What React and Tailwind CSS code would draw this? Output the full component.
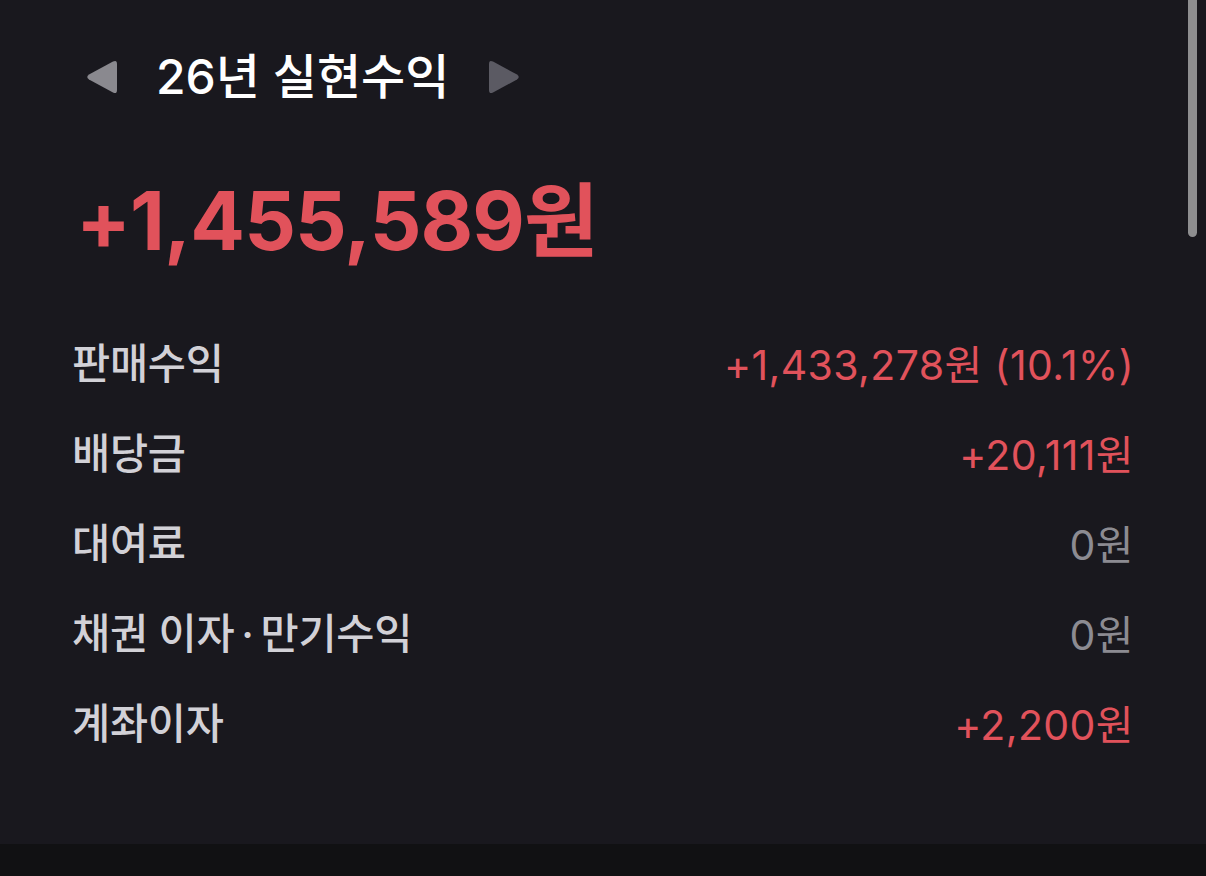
import React from 'react';

const Dot = () => <span className="mx-[7px]">·</span>;

const rows = [
  { key: 'sale', label: '판매수익', value: '+1,433,278원 (10.1%)', tone: 'up' },
  { key: 'div', label: '배당금', value: '+20,111원', tone: 'up' },
  { key: 'lend', label: '대여료', value: '0원', tone: 'zero' },
  {
    key: 'bond',
    label: (
      <>
        채권 이자<Dot />만기수익
      </>
    ),
    value: '0원',
    tone: 'zero',
  },
  { key: 'acct', label: '계좌이자', value: '+2,200원', tone: 'up' },
];

const fontStack = { fontFamily: '"Inter", "Noto Sans CJK KR", sans-serif' };

const Arrow = ({ dir, className }) => (
  <svg width="34" height="36" viewBox="0 0 34 36" className={className}>
    {dir === 'left' ? (
      <path
        d="M28 2.5 Q32 0.5 32 5 L32 31 Q32 35.5 28 33.5 L4 20.5 Q0.5 18 4 15.5 Z"
        fill="currentColor"
      />
    ) : (
      <path
        d="M6 2.5 Q2 0.5 2 5 L2 31 Q2 35.5 6 33.5 L30 20.5 Q33.5 18 30 15.5 Z"
        fill="currentColor"
      />
    )}
  </svg>
);

const Row = ({ label, value, tone }) => (
  <div className="flex h-[90px] items-center justify-between">
    <span className="text-[41.5px] font-medium leading-none tracking-[-0.3px] text-[#d2d1d7]">
      {label}
    </span>
    <span
      className={`text-[41px] leading-none tracking-[0.4px] ${
        tone === 'up' ? 'text-[#e1525b]' : 'text-[#8c8b92]'
      }`}
    >
      {value}
    </span>
  </div>
);

export default function App() {
  return (
    <div className="flex h-[876px] w-[1206px] flex-col bg-[#19181e]" style={fontStack}>
      <div className="relative flex-1">
        {/* year switcher */}
        <div className="flex h-[154px] items-center pl-[85px]">
          <Arrow dir="left" className="text-[#8a898f]" />
          <h1 className="ml-[37px] text-[48px] font-medium leading-none text-white">
            26년 실현수익
          </h1>
          <Arrow dir="right" className="ml-[38px] text-[#5b5a63]" />
        </div>

        <div className="flex h-[134px] items-center pl-[76px]">
          <span className="text-[81px] font-bold leading-none tracking-[-0.9px] text-[#e1525b]">
            +1,455,589원
          </span>
        </div>

        <div className="mt-[32px] flex flex-col pl-[72px] pr-[72px]">
          {rows.map(({ key, ...r }) => (
            <Row key={key} {...r} />
          ))}
        </div>

        {/* scrollbar thumb */}
        <div className="absolute right-[9px] top-0 h-[237px] w-[9px] rounded-b-full bg-[#8e8e90]" />
      </div>
      <div className="h-[32px] bg-[#111113]" />
    </div>
  );
}
